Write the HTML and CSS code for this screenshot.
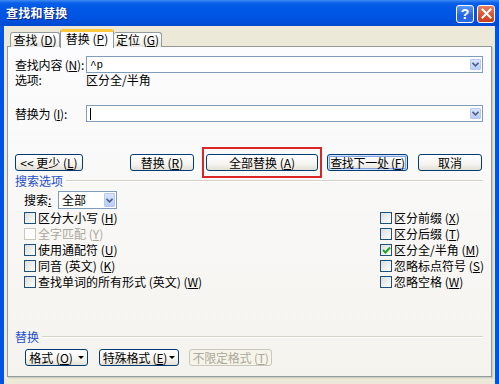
FILE: index.html
```html
<!DOCTYPE html>
<html lang="zh">
<head>
<meta charset="utf-8">
<title>查找和替换</title>
<link rel="stylesheet" href="styles.css">
</head>
<body>
<div class="window">
  <div class="titlebar">
    <span class="title">查找和替换</span>
    <div class="tb-buttons">
      <span class="tb-btn help">?</span>
      <span class="tb-btn close"><svg width="11" height="11" viewBox="0 0 11 11"><path d="M1.5 1.5 L9.5 9.5 M9.5 1.5 L1.5 9.5" stroke="#fff" stroke-width="2" stroke-linecap="square"/></svg></span>
    </div>
  </div>
  <div class="client">
    <div class="tabs">
      <div class="tab t1">查找 (<u>D</u>)</div>
      <div class="tab t2 active">替换 (<u>P</u>)</div>
      <div class="tab t3">定位 (<u>G</u>)</div>
    </div>
    <div class="panel">
      <div class="field-row">
        <span class="field-label">查找内容 (<u>N</u>):</span>
        <div class="combo">
          <span class="combo-text">^p</span>
          <span class="dd"><svg width="7" height="5" viewBox="0 0 7 5"><path d="M0.5 0.8 L3.5 3.8 L6.5 0.8" fill="none" stroke="#4D6185" stroke-width="1.6"/></svg></span>
        </div>
      </div>
      <div class="opt-row">
        <span class="field-label">选项:</span>
        <span>区分全/半角</span>
      </div>
      <div class="field-row replace-row">
        <span class="field-label">替换为 (<u>I</u>):</span>
        <div class="combo">
          <span class="caret"></span>
          <span class="dd"><svg width="7" height="5" viewBox="0 0 7 5"><path d="M0.5 0.8 L3.5 3.8 L6.5 0.8" fill="none" stroke="#4D6185" stroke-width="1.6"/></svg></span>
        </div>
      </div>
      <div class="btn-row">
        <button class="btn b-less">&lt;&lt; 更少 (<u>L</u>)</button>
        <button class="btn b-replace">替换 (<u>R</u>)</button>
        <button class="btn b-all">全部替换 (<u>A</u>)</button>
        <button class="btn b-next default">查找下一处 (<u>F</u>)</button>
        <button class="btn b-cancel">取消</button>
      </div>
      <div class="section">
        <span class="section-title">搜索选项</span>
        <span class="section-line"></span>
      </div>
      <div class="search-row">
        <span class="search-label">搜索<u>:</u></span>
        <div class="select">
          <span class="select-text">全部</span>
          <span class="dd"><svg width="7" height="5" viewBox="0 0 7 5"><path d="M0.5 0.8 L3.5 3.8 L6.5 0.8" fill="none" stroke="#4D6185" stroke-width="1.6"/></svg></span>
        </div>
      </div>
      <div class="checks">
        <div class="col">
          <label class="chk"><span class="box"></span>区分大小写 (<u>H</u>)</label>
          <label class="chk disabled"><span class="box"></span>全字匹配 (<u>Y</u>)</label>
          <label class="chk"><span class="box"></span>使用通配符 (<u>U</u>)</label>
          <label class="chk"><span class="box"></span>同音 (英文) (<u>K</u>)</label>
          <label class="chk"><span class="box"></span>查找单词的所有形式 (英文) (<u>W</u>)</label>
        </div>
        <div class="col">
          <label class="chk"><span class="box"></span>区分前缀 (<u>X</u>)</label>
          <label class="chk"><span class="box"></span>区分后缀 (<u>T</u>)</label>
          <label class="chk"><span class="box checked"><svg width="9" height="8" viewBox="0 0 9 8"><path d="M1 4 L3.5 6.5 L8 1.5" fill="none" stroke="#21A121" stroke-width="2"/></svg></span>区分全/半角 (<u>M</u>)</label>
          <label class="chk"><span class="box"></span>忽略标点符号 (<u>S</u>)</label>
          <label class="chk"><span class="box"></span>忽略空格 (<u>W</u>)</label>
        </div>
      </div>
      <div class="section replace-sec">
        <span class="section-title">替换</span>
        <span class="section-line"></span>
      </div>
      <div class="bottom-btns">
        <button class="btn b-format">格式 (<u>O</u>)<span class="tri"></span></button>
        <button class="btn b-special">特殊格式 (<u>E</u>)<span class="tri"></span></button>
        <button class="btn b-nofmt" disabled>不限定格式 (<u>T</u>)</button>
      </div>
    </div>
  </div>
</div>
</body>
</html>
```
FILE: styles.css
```css
* { box-sizing: border-box; }
html, body { margin: 0; padding: 0; }
body {
  width: 499px;
  height: 384px;
  overflow: hidden;
  font-family: "Noto Sans CJK SC", "Liberation Sans", sans-serif;
  font-size: 12px;
  line-height: 14px;
  color: #000;
  background: #ECE9D8;
}
u { text-decoration: underline; text-underline-offset: 1px; }

.window {
  width: 499px;
  height: 384px;
  display: flex;
  flex-direction: column;
}

.titlebar {
  height: 26px;
  flex: none;
  display: flex;
  align-items: center;
  justify-content: space-between;
  padding: 0 4px 0 6px;
  background: linear-gradient(to bottom, #3F8CF3 0px, #0A5FE8 3px, #0058E6 8px, #0054E3 18px, #0049D0 26px);
}
.title {
  color: #fff;
  font-weight: 700;
  font-size: 12px;
  letter-spacing: 0.3px;
  text-shadow: 1px 1px 0 #0A1E80;
}
.tb-buttons { display: flex; gap: 3px; margin-top: 1px; }
.tb-btn {
  width: 18px;
  height: 18px;
  border: 1px solid #fff;
  border-radius: 3px;
  display: flex;
  align-items: center;
  justify-content: center;
  color: #fff;
}
.help {
  background: linear-gradient(to bottom, #5B9AF8, #2563E0 60%, #2B6AE8);
  font-family: "Liberation Sans", sans-serif;
  font-weight: 700;
  font-size: 14px;
}
.close {
  background: linear-gradient(to bottom, #E6805F, #D9512F 60%, #C8401E);
}

.client {
  flex: 1;
  border-left: 4px solid #0054E3;
  border-right: 4px solid #0054E3;
  background: #ECE9D8;
  padding: 3px 3px 0 3px;
  display: flex;
  flex-direction: column;
}

.tabs {
  display: flex;
  height: 18px;
  padding-left: 3px;
  position: relative;
  z-index: 1;
}
.tab {
  margin-top: 3px;
  height: 15px;
  border: 1px solid #919B9C;
  border-bottom: none;
  border-radius: 3px 3px 0 0;
  background: linear-gradient(to bottom, #FFFFFF, #F3F3EF 60%, #E6E5DE);
  display: flex;
  align-items: center;
  justify-content: center;
  line-height: 12px;
  white-space: pre;
}
.t1 { width: 50px; }
.t2 { width: 54px; }
.t3 { width: 48px; border-left: none; }
.tab.active {
  margin-top: 0;
  height: 19px;
  background: #FCFCFE;
  border-top: 3px solid #FFC83C;
  border-left: 1px solid #919B9C;
  border-right: 1px solid #919B9C;
  padding-bottom: 2px;
}

.panel {
  height: 331px;
  margin-top: -1px;
  border: 1px solid #919B9C;
  background: linear-gradient(to bottom, #FCFCFE, #F4F3EE);
  box-shadow: 1px 1px 0 #D0CEBF, 2px 2px 0 #E3E0D0;
  padding: 9px 8px 0 7px;
  display: flex;
  flex-direction: column;
}

.field-row {
  display: flex;
  align-items: center;
  height: 17px;
}
.field-label { width: 71px; flex: none; line-height: 12px; letter-spacing: -0.2px; }
.combo {
  flex: 1;
  height: 17px;
  border: 1px solid #7F9DB9;
  background: #fff;
  display: flex;
  align-items: center;
  justify-content: space-between;
  padding: 0 1px 0 3px;
}
.combo-text { font-family: "Liberation Mono", monospace; font-size: 11px; line-height: 12px; }
.caret { width: 1px; height: 12px; background: #000; }
.dd {
  width: 11px;
  height: 11px;
  border: 1px solid #B7C9F3;
  border-radius: 1px;
  background: linear-gradient(to bottom, #D9E4FD, #B9CDF8);
  display: flex;
  align-items: center;
  justify-content: center;
}
.opt-row {
  display: flex;
  align-items: center;
  height: 14px;
  line-height: 12px;
}
.replace-row { margin-top: 18px; }

.btn {
  font-family: inherit;
  font-size: 12px;
  height: 17px;
  padding: 0;
  border: 1px solid #003C74;
  border-radius: 3px;
  background: linear-gradient(to bottom, #FFFFFF, #F5F4EF 60%, #E3E0D6);
  color: #000;
  display: inline-flex;
  align-items: center;
  justify-content: center;
  line-height: 12px;
  white-space: pre;
}
.btn.default {
  box-shadow: inset 0 0 0 1px #CEE0FB, inset 0 0 0 2px #7FA2E4;
}
.btn:disabled {
  border-color: #C9C7BA;
  background: #F5F4EA;
  color: #ACA899;
}
.btn-row {
  display: flex;
  margin-top: 32px;
}
.b-less { width: 68px; }
.b-replace { width: 64px; margin-left: 47px; }
.b-all { width: 112px; margin-left: 12px; position: relative; }
.b-all::after {
  content: "";
  position: absolute;
  left: -5px;
  right: -5px;
  top: -8px;
  bottom: -8px;
  border: 2px solid #D92626;
}
.b-next { width: 81px; margin-left: 9px; letter-spacing: -0.3px; }
.b-cancel { width: 64px; margin-left: 10px; }

.section {
  display: flex;
  align-items: center;
  height: 14px;
  margin-top: 3px;
}
.section-title { color: #1F4FC9; line-height: 14px; }
.section-line {
  flex: 1;
  margin-left: 3px;
  height: 2px;
  border-top: 1px solid #D6D3C6;
  border-bottom: 1px solid #FFFFFF;
}

.search-row {
  display: flex;
  align-items: center;
  margin-top: 3px;
  padding-left: 9px;
  height: 18px;
}
.search-label { width: 34px; }
.select {
  width: 59px;
  height: 18px;
  border: 1px solid #7F9DB9;
  background: #fff;
  display: flex;
  align-items: center;
  justify-content: space-between;
  padding: 0 1px 0 3px;
}
.select .dd { height: 14px; }

.checks {
  display: grid;
  grid-template-columns: 1fr 103px;
  padding-left: 9px;
  margin-top: 1px;
}
.col { display: flex; flex-direction: column; }
.chk {
  display: flex;
  align-items: center;
  height: 16px;
  line-height: 12px;
  white-space: pre;
}
.box {
  width: 12px;
  height: 12px;
  flex: none;
  border: 1px solid #1C5180;
  background: linear-gradient(135deg, #DCDCD7, #FFFFFF);
  margin-right: 2px;
  display: flex;
  align-items: center;
  justify-content: center;
}
.chk.disabled { color: #ACA899; }
.chk.disabled .box { border-color: #CAC8BB; background: #fff; }

.replace-sec { margin-top: 40px; }

.bottom-btns {
  display: flex;
  margin-top: 5px;
  padding-left: 10px;
}
.b-format { width: 63px; }
.b-special { width: 80px; margin-left: 11px; letter-spacing: -0.2px; }
.b-nofmt { width: 83px; margin-left: 10px; letter-spacing: -0.2px; }
.tri {
  width: 0;
  height: 0;
  border-left: 3px solid transparent;
  border-right: 3px solid transparent;
  border-top: 3px solid #000;
  margin-left: 5px;
}
.b-special .tri { margin-left: 2px; }
```
